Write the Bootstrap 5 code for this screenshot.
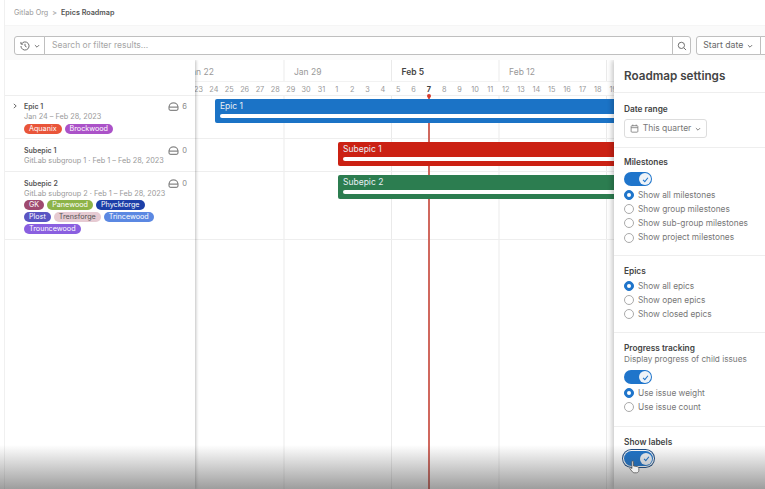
<!DOCTYPE html>
<html lang="en">
<head>
    <meta charset="UTF-8">
    <meta name="viewport" content="width=device-width, initial-scale=1.0">
    <title>Epics Roadmap</title>
    <link href="https://cdn.jsdelivr.net/npm/bootstrap@5.3.0/dist/css/bootstrap.min.css" rel="stylesheet">
    <style>
        html, body { height: 100%; overflow: hidden; }
        body { font-family: Inter, "Liberation Sans", sans-serif; color: #555; background: #fff; }
        .page-wrap { position: relative; width: 765px; height: 489px; overflow: hidden; padding-left: 4px; }
        .page-inner { height: 100%; border-left: 1px solid #f0f0f0; display: flex; flex-direction: column; }

        .crumb-bar { height: 26px; padding: 1px 0 0 9px; border-bottom: 1px solid #f5f5f5; }
        .crumb-bar .breadcrumb { --bs-breadcrumb-divider: '>'; --bs-breadcrumb-item-padding-x: 4px; --bs-breadcrumb-margin-bottom: 0; font-size: 7.2px; }
        .crumb-bar .breadcrumb-item a { color: #999; text-decoration: none; }
        .crumb-bar .breadcrumb-item.active { color: #555; font-weight: 600; }
        .crumb-bar .breadcrumb-item + .breadcrumb-item::before { color: #aaa; }

        .filter-bar { height: 34px; padding: 10px 0 5px 9px; background: #fafafa; gap: 5px; }
        .filter-group { width: 677px; flex: none; height: 19px; }
        .filter-group .btn, .sort-group .btn { --bs-btn-border-color: #bfbfbf; --bs-btn-color: #666; --bs-btn-bg: #fff; --bs-btn-hover-bg: #fff; --bs-btn-hover-border-color: #bfbfbf; --bs-btn-hover-color: #666; --bs-btn-border-radius: 3px; padding: 0; font-size: 8.7px; display: flex; align-items: center; justify-content: center; gap: 4px; }
        .filter-hist { width: 31px; }
        .filter-search { width: 19px; }
        .filter-group .form-control { font-size: 8.5px; padding: 0 7px; border-color: #bfbfbf; color: #999; min-height: 0; border-radius: 0; }
        .filter-group .form-control::placeholder { color: #a5a5a5; }
        .sort-group { flex: none; width: 90px; height: 19px; }
        .sort-date { width: 64px; flex: none; }
        .sort-dir { width: 26px; flex: none; justify-content: flex-start !important; padding-left: 6px !important; }

        .road-main { flex: 1; min-height: 0; }
        .left-col { width: 190px; flex: none; position: relative; z-index: 2; background: #fff; box-shadow: 1px 0 3px rgba(0,0,0,.25); clip-path: inset(0 -6px 0 0); }
        .left-head { height: 36px; border-bottom: 1px solid #eee; }
        .epic-row { border-bottom: 1px solid #eee; padding: 5px 8px 0 19px; position: relative; }
        .row-a { height: 43px; padding-top: 5.5px; }
        .row-b { height: 33px; padding-top: 6.5px; }
        .row-c { height: 68px; padding-top: 6.5px; }
        .epic-toggle { position: absolute; left: 7px; top: 7px; }
        .epic-title { font-size: 7px; font-weight: 600; color: #555; line-height: 10px; }
        .epic-sub { font-size: 7.3px; color: #999; line-height: 10px; white-space: nowrap; }
        .epic-count { font-size: 7.5px; color: #888; line-height: 10px; gap: 3px; }
        .tag-wrap { display: flex; flex-wrap: wrap; gap: 2px 3px; margin-top: 2px; width: 140px; }
        .row-c .tag-wrap { margin-top: 1px; }
        .tag-item { font-size: 7.2px; line-height: 10px; border-radius: 5px; padding: 0 5px; color: #fff; white-space: nowrap; }

        .time-col { flex: 1; min-width: 0; position: relative; overflow: hidden; }
        .time-inner { width: 600px; height: 100%; margin-left: -19.5px; background-image: linear-gradient(to right, #eaeaea 1px, transparent 1px); background-size: 107.5px 100%; background-position: 107.5px 0; }
        .week-head { display: flex; height: 36px; border-bottom: 1px solid #eee; background: #fff; background-image: linear-gradient(to right, #eaeaea 1px, transparent 1px); background-size: 107.5px 22px; background-position: 107.5px 0; background-repeat: repeat-x; }
        .week-col { width: 107.5px; flex: none; }
        .week-name { height: 22px; line-height: 24px; padding-left: 11px; font-size: 8.5px; color: #999; border-bottom: 1px solid #f2f2f2; }
        .week-name.is-now { color: #444; font-weight: 600; }
        .day-row { display: flex; height: 14px; }
        .day-row span { width: 15.36px; text-align: center; font-size: 7.3px; line-height: 15px; color: #999; }
        .day-row span.is-today { color: #444; font-weight: 700; }
        .time-row { border-bottom: 1px solid #eee; padding-top: 3px; }
        .road-bar { height: 23.5px; border-radius: 2px 0 0 2px; color: #e8eef5; font-size: 8.5px; line-height: 15px; padding: 0 5px; width: 520px; position: relative; z-index: 1; }
        .road-bar i { display: block; height: 4px; background: #fff; border-radius: 2px 0 0 2px; }
        .bar-blue { background: #1b73c6; margin-left: 39.5px; }
        .bar-red { background: #cb2113; margin-left: 162.5px; width: 400px; }
        .bar-green { background: #2c7d50; margin-left: 162.5px; width: 400px; }
        .today-line { position: absolute; left: 233px; top: 36px; bottom: 0; width: 2px; background-color: #d0685e; }
        .today-line::before { content: ""; position: absolute; left: -1px; top: -2px; width: 4px; height: 4px; border-radius: 50%; background: #d63a2c; }

        .side-drawer { position: absolute; left: 614px; top: 60px; width: 151px; bottom: 0; background: #fff; box-shadow: -2px 0 5px rgba(0,0,0,.22); clip-path: inset(0 0 0 -8px); z-index: 3; }
        .drawer-head { height: 33px; padding: 9px 10px 0; font-size: 11.7px; font-weight: 600; line-height: 14px; color: #444; border-bottom: 1px solid #eee; }
        .drawer-sec { border-bottom: 1px solid #eee; padding: 0 10px; }
        .sec-date { height: 55px; padding-top: 11px; }
        .sec-miles { height: 108px; padding-top: 9px; }
        .sec-epics { height: 77px; padding-top: 10px; }
        .sec-prog { height: 94px; padding-top: 10px; }
        .sec-labels { border: 0; padding-top: 10px; }
        .sec-title { font-size: 8.3px; font-weight: 600; color: #444; line-height: 10px; }
        .sec-title-gap { margin-bottom: 3px; }
        .sec-text { font-size: 8.2px; color: #777; line-height: 12px; white-space: nowrap; }
        .range-btn { --bs-btn-border-color: #ddd; --bs-btn-color: #777; --bs-btn-bg: #fff; --bs-btn-hover-bg: #fff; --bs-btn-hover-border-color: #ddd; --bs-btn-hover-color: #777; --bs-btn-border-radius: 3px; width: 83px; height: 19px; padding: 0; margin-top: 5px; font-size: 8.5px; display: flex; align-items: center; justify-content: center; gap: 4px; }
        .toggle-sw { display: block; width: 28px; height: 14px; border-radius: 7px; background: #1f75cb; border: 0; padding: 0; position: relative; margin: 5px 0 2px; }
        .toggle-sw span { position: absolute; right: 1px; top: 1px; width: 12px; height: 12px; border-radius: 50%; background: #eef3f8; display: flex; align-items: center; justify-content: center; }
        .toggle-sw.is-focus { width: 29px; height: 15px; border-radius: 8px; margin-top: 4px; box-shadow: 0 0 0 1px #fff, 0 0 0 2px #1f4e85; }
        .toggle-sw.is-focus span { top: 1.5px; }
        .radio-list .form-check { min-height: 0; margin: 0; padding-left: 14px; height: 14.2px; display: flex; align-items: center; }
        .radio-list .form-check-input { width: 10px; height: 10px; margin: 0 4px 0 -14px; flex: none; border-color: #aaa; }
        .radio-list .form-check-input:checked { background-color: #1f75cb; border-color: #1f75cb; }
        .radio-list .form-check-label { font-size: 8.3px; color: #777; white-space: nowrap; }

        .fade-bottom { position: absolute; left: 0; right: 0; bottom: 0; height: 44px; background: linear-gradient(to bottom, rgba(60,60,60,0), rgba(60,60,60,.5)); z-index: 5; pointer-events: none; }
        .hand-cursor { position: absolute; left: 629px; top: 460px; z-index: 6; }

        .tag-aquanix { background: #e9553a; }
        .tag-brock { background: #ab52c8; }
        .tag-gk { background: #9f4a70; }
        .tag-pane { background: #8db348; }
        .tag-phyck { background: #1c3fa8; }
        .tag-plost { background: #5a55c3; }
        .tag-trens { background: #e6cad2; color: #555; }
        .tag-trince { background: #5b88e2; }
        .tag-trounce { background: #8a5fe0; }
    </style>
</head>
<body>
    <div class="page-wrap">
        <div class="page-inner">
            <nav class="crumb-bar d-flex align-items-center">
                <ol class="breadcrumb">
                    <li class="breadcrumb-item"><a href="#">Gitlab Org</a></li>
                    <li class="breadcrumb-item active">Epics Roadmap</li>
                </ol>
            </nav>

            <div class="filter-bar d-flex">
                <div class="input-group filter-group flex-nowrap">
                    <button class="btn filter-hist" type="button">
                        <svg width="10" height="10" viewBox="0 0 16 16" fill="none" stroke="#666" stroke-width="1.5"><path d="M2.5 4.5A6.5 6.5 0 1 1 1.5 8"/><path d="M1.5 1.5v3.5h3.5"/><path d="M8 4.5V8l2.5 1.5"/></svg>
                        <svg width="6" height="6" viewBox="0 0 10 10" fill="none" stroke="#666" stroke-width="1.5"><path d="M1.5 3.5 5 7l3.500-3.500"/></svg>
                    </button>
                    <input type="text" class="form-control" placeholder="Search or filter results...">
                    <button class="btn filter-search" type="button">
                        <svg width="10" height="10" viewBox="0 0 16 16" fill="none" stroke="#666" stroke-width="1.5"><circle cx="7" cy="7" r="5"/><path d="m11 11 3.5 3.5"/></svg>
                    </button>
                </div>
                <div class="btn-group sort-group">
                    <button class="btn sort-date" type="button">Start date
                        <svg width="6" height="6" viewBox="0 0 10 10" fill="none" stroke="#666" stroke-width="1.5"><path d="M1.5 3.5 5 7l3.500-3.500"/></svg>
                    </button>
                    <button class="btn sort-dir" type="button">
                        <svg width="10" height="10" viewBox="0 0 16 16" fill="none" stroke="#666" stroke-width="1.5"><path d="M4 14V2M1 5l3-3 3 3"/></svg>
                    </button>
                </div>
            </div>

            <div class="road-main d-flex">
                <div class="left-col">
                    <div class="left-head"></div>
                    <div class="epic-row row-a">
                        <svg class="epic-toggle" width="6" height="6" viewBox="0 0 10 10" fill="none" stroke="#666" stroke-width="1.6"><path d="M3 1.500 7 5 3 8.500"/></svg>
                        <div class="d-flex justify-content-between">
                            <div class="epic-title">Epic 1</div>
                            <div class="epic-count d-flex align-items-center">
                                <svg width="11" height="9" viewBox="0 0 18 15" fill="none" stroke="#888" stroke-width="2"><path d="M2 8.500V7a7 5.500 0 0 1 14 0v1.500"/><path d="M1.500 8.500h15V11a3 3 0 0 1-3 3h-9a3 3 0 0 1-3-3z"/></svg>6
                            </div>
                        </div>
                        <div class="epic-sub">Jan 24 – Feb 28, 2023</div>
                        <div class="tag-wrap">
                            <span class="tag-item tag-aquanix">Aquanix</span>
                            <span class="tag-item tag-brock">Brockwood</span>
                        </div>
                    </div>
                    <div class="epic-row row-b">
                        <div class="d-flex justify-content-between">
                            <div class="epic-title">Subepic 1</div>
                            <div class="epic-count d-flex align-items-center">
                                <svg width="11" height="9" viewBox="0 0 18 15" fill="none" stroke="#888" stroke-width="2"><path d="M2 8.500V7a7 5.500 0 0 1 14 0v1.500"/><path d="M1.500 8.500h15V11a3 3 0 0 1-3 3h-9a3 3 0 0 1-3-3z"/></svg>0
                            </div>
                        </div>
                        <div class="epic-sub">GitLab subgroup 1 · Feb 1 – Feb 28, 2023</div>
                    </div>
                    <div class="epic-row row-c">
                        <div class="d-flex justify-content-between">
                            <div class="epic-title">Subepic 2</div>
                            <div class="epic-count d-flex align-items-center">
                                <svg width="11" height="9" viewBox="0 0 18 15" fill="none" stroke="#888" stroke-width="2"><path d="M2 8.500V7a7 5.500 0 0 1 14 0v1.500"/><path d="M1.500 8.500h15V11a3 3 0 0 1-3 3h-9a3 3 0 0 1-3-3z"/></svg>0
                            </div>
                        </div>
                        <div class="epic-sub">GitLab subgroup 2 · Feb 1 – Feb 28, 2023</div>
                        <div class="tag-wrap">
                            <span class="tag-item tag-gk">GK</span>
                            <span class="tag-item tag-pane">Panewood</span>
                            <span class="tag-item tag-phyck">Phyckforge</span>
                            <span class="tag-item tag-plost">Plost</span>
                            <span class="tag-item tag-trens">Trensforge</span>
                            <span class="tag-item tag-trince">Trincewood</span>
                            <span class="tag-item tag-trounce">Trouncewood</span>
                        </div>
                    </div>
                </div>

                <div class="time-col">
                    <div class="time-inner">
                        <div class="week-head">
                            <div class="week-col">
                                <div class="week-name">Jan 22</div>
                                <div class="day-row"><span></span><span>23</span><span>24</span><span>25</span><span>26</span><span>27</span><span>28</span></div>
                            </div>
                            <div class="week-col">
                                <div class="week-name">Jan 29</div>
                                <div class="day-row"><span>29</span><span>30</span><span>31</span><span>1</span><span>2</span><span>3</span><span>4</span></div>
                            </div>
                            <div class="week-col">
                                <div class="week-name is-now">Feb 5</div>
                                <div class="day-row"><span>5</span><span>6</span><span class="is-today">7</span><span>8</span><span>9</span><span>10</span><span>11</span></div>
                            </div>
                            <div class="week-col">
                                <div class="week-name">Feb 12</div>
                                <div class="day-row"><span>12</span><span>13</span><span>14</span><span>15</span><span>16</span><span>17</span><span>18</span></div>
                            </div>
                            <div class="week-col">
                                <div class="week-name"></div>
                                <div class="day-row"><span>19</span></div>
                            </div>
                        </div>
                        <div class="time-row row-a"><div class="road-bar bar-blue">Epic 1<i></i></div></div>
                        <div class="time-row row-b"><div class="road-bar bar-red">Subepic 1<i></i></div></div>
                        <div class="time-row row-c"><div class="road-bar bar-green">Subepic 2<i></i></div></div>
                    </div>
                    <div class="today-line"></div>
                </div>
            </div>
        </div>

        <aside class="side-drawer">
            <div class="drawer-head">Roadmap settings</div>

            <div class="drawer-sec sec-date">
                <div class="sec-title">Date range</div>
                <button class="btn range-btn" type="button">
                    <svg width="9" height="9" viewBox="0 0 16 16" fill="none" stroke="#777" stroke-width="1.4"><rect x="2" y="3" width="12" height="11.500" rx="1.500"/><path d="M2 6.500h12M5 1v3M11 1v3"/></svg>
                    This quarter
                    <svg width="6" height="6" viewBox="0 0 10 10" fill="none" stroke="#777" stroke-width="1.5"><path d="M1.500 3.500 5 7l3.500-3.500"/></svg>
                </button>
            </div>

            <div class="drawer-sec sec-miles radio-list">
                <div class="sec-title">Milestones</div>
                <button class="toggle-sw" type="button"><span><svg width="7" height="7" viewBox="0 0 10 10" fill="none" stroke="#1f75cb" stroke-width="1.5"><path d="M1.500 5.500 4 8l4.500-5.500"/></svg></span></button>
                <div class="form-check"><input class="form-check-input" type="radio" name="miles" id="m1" checked><label class="form-check-label" for="m1">Show all milestones</label></div>
                <div class="form-check"><input class="form-check-input" type="radio" name="miles" id="m2"><label class="form-check-label" for="m2">Show group milestones</label></div>
                <div class="form-check"><input class="form-check-input" type="radio" name="miles" id="m3"><label class="form-check-label" for="m3">Show sub-group milestones</label></div>
                <div class="form-check"><input class="form-check-input" type="radio" name="miles" id="m4"><label class="form-check-label" for="m4">Show project milestones</label></div>
            </div>

            <div class="drawer-sec sec-epics radio-list">
                <div class="sec-title sec-title-gap">Epics</div>
                <div class="form-check"><input class="form-check-input" type="radio" name="epics" id="e1" checked><label class="form-check-label" for="e1">Show all epics</label></div>
                <div class="form-check"><input class="form-check-input" type="radio" name="epics" id="e2"><label class="form-check-label" for="e2">Show open epics</label></div>
                <div class="form-check"><input class="form-check-input" type="radio" name="epics" id="e3"><label class="form-check-label" for="e3">Show closed epics</label></div>
            </div>

            <div class="drawer-sec sec-prog radio-list">
                <div class="sec-title">Progress tracking</div>
                <div class="sec-text">Display progress of child issues</div>
                <button class="toggle-sw" type="button"><span><svg width="7" height="7" viewBox="0 0 10 10" fill="none" stroke="#1f75cb" stroke-width="1.5"><path d="M1.500 5.500 4 8l4.500-5.500"/></svg></span></button>
                <div class="form-check"><input class="form-check-input" type="radio" name="prog" id="p1" checked><label class="form-check-label" for="p1">Use issue weight</label></div>
                <div class="form-check"><input class="form-check-input" type="radio" name="prog" id="p2"><label class="form-check-label" for="p2">Use issue count</label></div>
            </div>

            <div class="drawer-sec sec-labels">
                <div class="sec-title">Show labels</div>
                <button class="toggle-sw is-focus" type="button"><span><svg width="7" height="7" viewBox="0 0 10 10" fill="none" stroke="#1f75cb" stroke-width="1.5"><path d="M1.500 5.500 4 8l4.500-5.500"/></svg></span></button>
            </div>
        </aside>

        <div class="fade-bottom"></div>
        <svg class="hand-cursor" width="11" height="14" viewBox="0 0 11 14"><path d="M3 1.200c.6-.5 1.400-.2 1.500.6V6l3.500.6c1 .2 1.800.8 1.800 1.900v2c0 1.300-1 2.300-2.300 2.300H5.200c-.8 0-1.400-.4-1.800-1L1 8.800c-.4-.6.400-1.400 1.100-.9l.8.700V2c0-.3 0-.6.100-.8z" fill="#f0f0f0" stroke="#555" stroke-width=".8"/></svg>
    </div>
    <script src="https://cdn.jsdelivr.net/npm/bootstrap@5.3.0/dist/js/bootstrap.bundle.min.js"></script>
</body>
</html>
